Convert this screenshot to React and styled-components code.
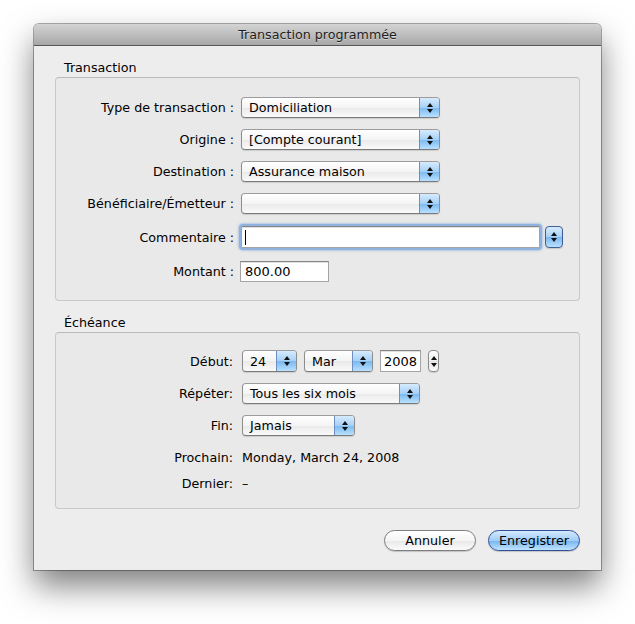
import React from 'react';
import styled, { createGlobalStyle } from 'styled-components';

const Global = createGlobalStyle`
  html, body { margin: 0; padding: 0; background: #ffffff; }
  body {
    font-family: "Lucida Grande", "DejaVu Sans", "Noto Sans", sans-serif;
    font-size: 12.7px;
    color: #000;
  }
  * { box-sizing: border-box; }
`;

const FS = '12.7px';

const Page = styled.div`
  width: 635px;
  height: 624px;
  padding: 24px 0 0 34px;
`;

const Window = styled.div`
  width: 567px;
  height: 546px;
  background: #ededed;
  border-radius: 5px 5px 0 0;
  box-shadow: 0 0 0 1px rgba(0, 0, 0, 0.32), 0 16px 32px rgba(0, 0, 0, 0.5);
  display: flex;
  flex-direction: column;
`;

const TitleBar = styled.div`
  height: 22px;
  flex: none;
  border-radius: 5px 5px 0 0;
  background: linear-gradient(#d4d4d4, #a7a7a7);
  border-bottom: 1px solid #555;
  display: flex;
  align-items: center;
  justify-content: center;
  font-size: ${FS};
  color: #1e1e1e;
  text-shadow: 0 1px 0 rgba(255, 255, 255, 0.45);
`;

const Content = styled.div`
  padding: 14px 21px 0 21px;
  display: flex;
  flex-direction: column;
`;

const SectionLabel = styled.div`
  height: 16px;
  line-height: 16px;
  margin: ${p => p.$top || 0}px 0 1px 9px;
  font-size: ${FS};
`;

const GroupBox = styled.div`
  background: #e9e9e9;
  border: 1px solid #c8c8c8;
  border-top-color: #bababa;
  border-radius: 4px;
  padding: ${p => p.$pt}px 0 ${p => p.$pb}px 0;
  display: flex;
  flex-direction: column;
`;

const Row = styled.div`
  display: grid;
  grid-template-columns: ${p => p.$labelW}px auto;
  column-gap: ${p => p.$gap}px;
  align-items: center;
  justify-content: start;
  height: ${p => p.$h}px;
  margin-top: ${p => p.$mt || 0}px;
`;

const Label = styled.div`
  text-align: right;
  white-space: nowrap;
  font-size: ${FS};
`;

const Value = styled.div`
  font-size: ${FS};
  white-space: nowrap;
`;

const Controls = styled.div`
  display: flex;
  align-items: center;
  gap: ${p => p.$gap || 0}px;
`;

const Popup = styled.div`
  width: ${p => p.$w}px;
  height: ${p => p.$h || 21}px;
  border: 1px solid #8d8d8d;
  border-top-color: #9c9c9c;
  border-bottom-color: #7a7a7a;
  border-radius: 4px;
  background: linear-gradient(#ffffff, #f4f4f4 50%, #e9e9e9 51%, #fafafa);
  display: flex;
  align-items: stretch;
  overflow: hidden;
  box-shadow: 0 1px 1px rgba(0, 0, 0, 0.12);
`;

const PopupText = styled.span`
  flex: 1;
  padding-left: ${p => p.$pl || 7}px;
  display: flex;
  align-items: center;
  font-size: ${FS};
  white-space: nowrap;
`;

const AquaArrows = styled.div`
  width: ${p => p.$w || 20}px;
  border-left: 1px solid #6b8fc0;
  background: linear-gradient(#d6ebfd, #a6d0f7 50%, #7ab8f0 51%, #b8e0fe);
  display: flex;
  flex-direction: column;
  align-items: center;
  justify-content: center;
  gap: 2px;
`;

const ComboStepper = styled.div`
  width: 18px;
  height: 22px;
  margin-left: 5px;
  border: 1px solid #3f5f96;
  border-radius: 4px;
  background: linear-gradient(#d6ebfd, #a6d0f7 50%, #7ab8f0 51%, #b8e0fe);
  display: flex;
  flex-direction: column;
  align-items: center;
  justify-content: center;
  gap: 2px;
  box-shadow: 0 1px 1px rgba(0, 0, 0, 0.15);
`;

const PlainStepper = styled.div`
  width: 11px;
  height: 22px;
  border: 1px solid #8a8a8a;
  border-radius: 4px;
  background: linear-gradient(#ffffff, #f0f0f0 50%, #e4e4e4 51%, #fafafa);
  display: flex;
  flex-direction: column;
  align-items: center;
  justify-content: center;
  gap: 3px;
  box-shadow: 0 1px 1px rgba(0, 0, 0, 0.12);
`;

const TextField = styled.div`
  width: ${p => p.$w}px;
  height: ${p => p.$h || 21}px;
  background: #ffffff;
  border: 1px solid #a4a4a4;
  border-top-color: #858585;
  box-shadow: inset 0 1px 0 rgba(0, 0, 0, 0.12)${p => p.$focus ? ', 0 0 0 2px #8fb2df, 0 0 2px 3px rgba(120,160,220,0.45)' : ''};
  border-radius: ${p => p.$focus ? 2 : 0}px;
  display: flex;
  align-items: center;
  padding-left: ${p => p.$pl || 4}px;
  font-size: 13px;
  white-space: nowrap;
`;

const Caret = styled.span`
  display: block;
  width: 1px;
  height: 15px;
  background: #000;
`;

const Footer = styled.div`
  display: flex;
  justify-content: flex-end;
  gap: 12px;
  margin-top: 21px;
`;

const PillButton = styled.div`
  width: 92px;
  height: 21px;
  border-radius: 11px;
  display: flex;
  align-items: center;
  justify-content: center;
  font-size: ${FS};
  border: 1px solid ${p => (p.$primary ? '#2f4f9a' : '#7d7d7d')};
  background: ${p =>
    p.$primary
      ? 'linear-gradient(#d3e9fd, #a1cdf6 50%, #76b4ee 51%, #bfe3ff)'
      : 'linear-gradient(#ffffff, #f5f5f5 50%, #e8e8e8 51%, #fbfbfb)'};
  box-shadow: 0 1px 1px rgba(0, 0, 0, 0.18);
`;

const Up = () => (
  <svg width="6" height="4" viewBox="0 0 6 4"><path d="M3 0 L6 4 L0 4 Z" fill="#111" /></svg>
);
const Down = () => (
  <svg width="6" height="4" viewBox="0 0 6 4"><path d="M0 0 L6 0 L3 4 Z" fill="#111" /></svg>
);

const PopupButton = ({ w, h, children }) => (
  <Popup $w={w} $h={h}>
    <PopupText>{children}</PopupText>
    <AquaArrows>
      <Up />
      <Down />
    </AquaArrows>
  </Popup>
);

const TLabel = 178;
const TGap = 7;
const ELabel = 177;
const EGap = 9;

export default function App() {
  return (
    <>
      <Global />
      <Page>
        <Window>
          <TitleBar>Transaction programmée</TitleBar>
          <Content>
            <SectionLabel>Transaction</SectionLabel>
            <GroupBox $pt={19} $pb={18}>
              <Row $labelW={TLabel} $gap={TGap} $h={21}>
                <Label>Type de transaction :</Label>
                <PopupButton w={199}>Domiciliation</PopupButton>
              </Row>
              <Row $labelW={TLabel} $gap={TGap} $h={21} $mt={11}>
                <Label>Origine :</Label>
                <PopupButton w={199}>[Compte courant]</PopupButton>
              </Row>
              <Row $labelW={TLabel} $gap={TGap} $h={21} $mt={11}>
                <Label>Destination :</Label>
                <PopupButton w={199}>Assurance maison</PopupButton>
              </Row>
              <Row $labelW={TLabel} $gap={TGap} $h={21} $mt={11}>
                <Label>Bénéficiaire/Émetteur :</Label>
                <PopupButton w={199}></PopupButton>
              </Row>
              <Row $labelW={TLabel} $gap={TGap} $h={22} $mt={12}>
                <Label>Commentaire :</Label>
                <Controls>
                  <TextField $w={299} $h={22} $focus $pl={3}>
                    <Caret />
                  </TextField>
                  <ComboStepper>
                    <Up />
                    <Down />
                  </ComboStepper>
                </Controls>
              </Row>
              <Row $labelW={TLabel} $gap={TGap - 1} $h={21} $mt={13}>
                <Label>Montant :</Label>
                <TextField $w={89} $h={21}>800.00</TextField>
              </Row>
            </GroupBox>

            <SectionLabel $top={14}>Échéance</SectionLabel>
            <GroupBox $pt={17} $pb={15}>
              <Row $labelW={ELabel} $gap={EGap} $h={22}>
                <Label>Début:</Label>
                <Controls $gap={7}>
                  <PopupButton w={55} h={22}>24</PopupButton>
                  <PopupButton w={69} h={22}>Mar</PopupButton>
                  <Controls $gap={7}>
                    <TextField $w={41} $h={22} $pl={3}>2008</TextField>
                    <PlainStepper>
                      <Up />
                      <Down />
                    </PlainStepper>
                  </Controls>
                </Controls>
              </Row>
              <Row $labelW={ELabel} $gap={EGap} $h={21} $mt={11}>
                <Label>Répéter:</Label>
                <PopupButton w={178}>Tous les six mois</PopupButton>
              </Row>
              <Row $labelW={ELabel} $gap={EGap} $h={21} $mt={11}>
                <Label>Fin:</Label>
                <PopupButton w={113}>Jamais</PopupButton>
              </Row>
              <Row $labelW={ELabel} $gap={EGap} $h={20} $mt={11}>
                <Label>Prochain:</Label>
                <Value>Monday, March 24, 2008</Value>
              </Row>
              <Row $labelW={ELabel} $gap={EGap} $h={20} $mt={6}>
                <Label>Dernier:</Label>
                <Value>–</Value>
              </Row>
            </GroupBox>

            <Footer>
              <PillButton>Annuler</PillButton>
              <PillButton $primary>Enregistrer</PillButton>
            </Footer>
          </Content>
        </Window>
      </Page>
    </>
  );
}
